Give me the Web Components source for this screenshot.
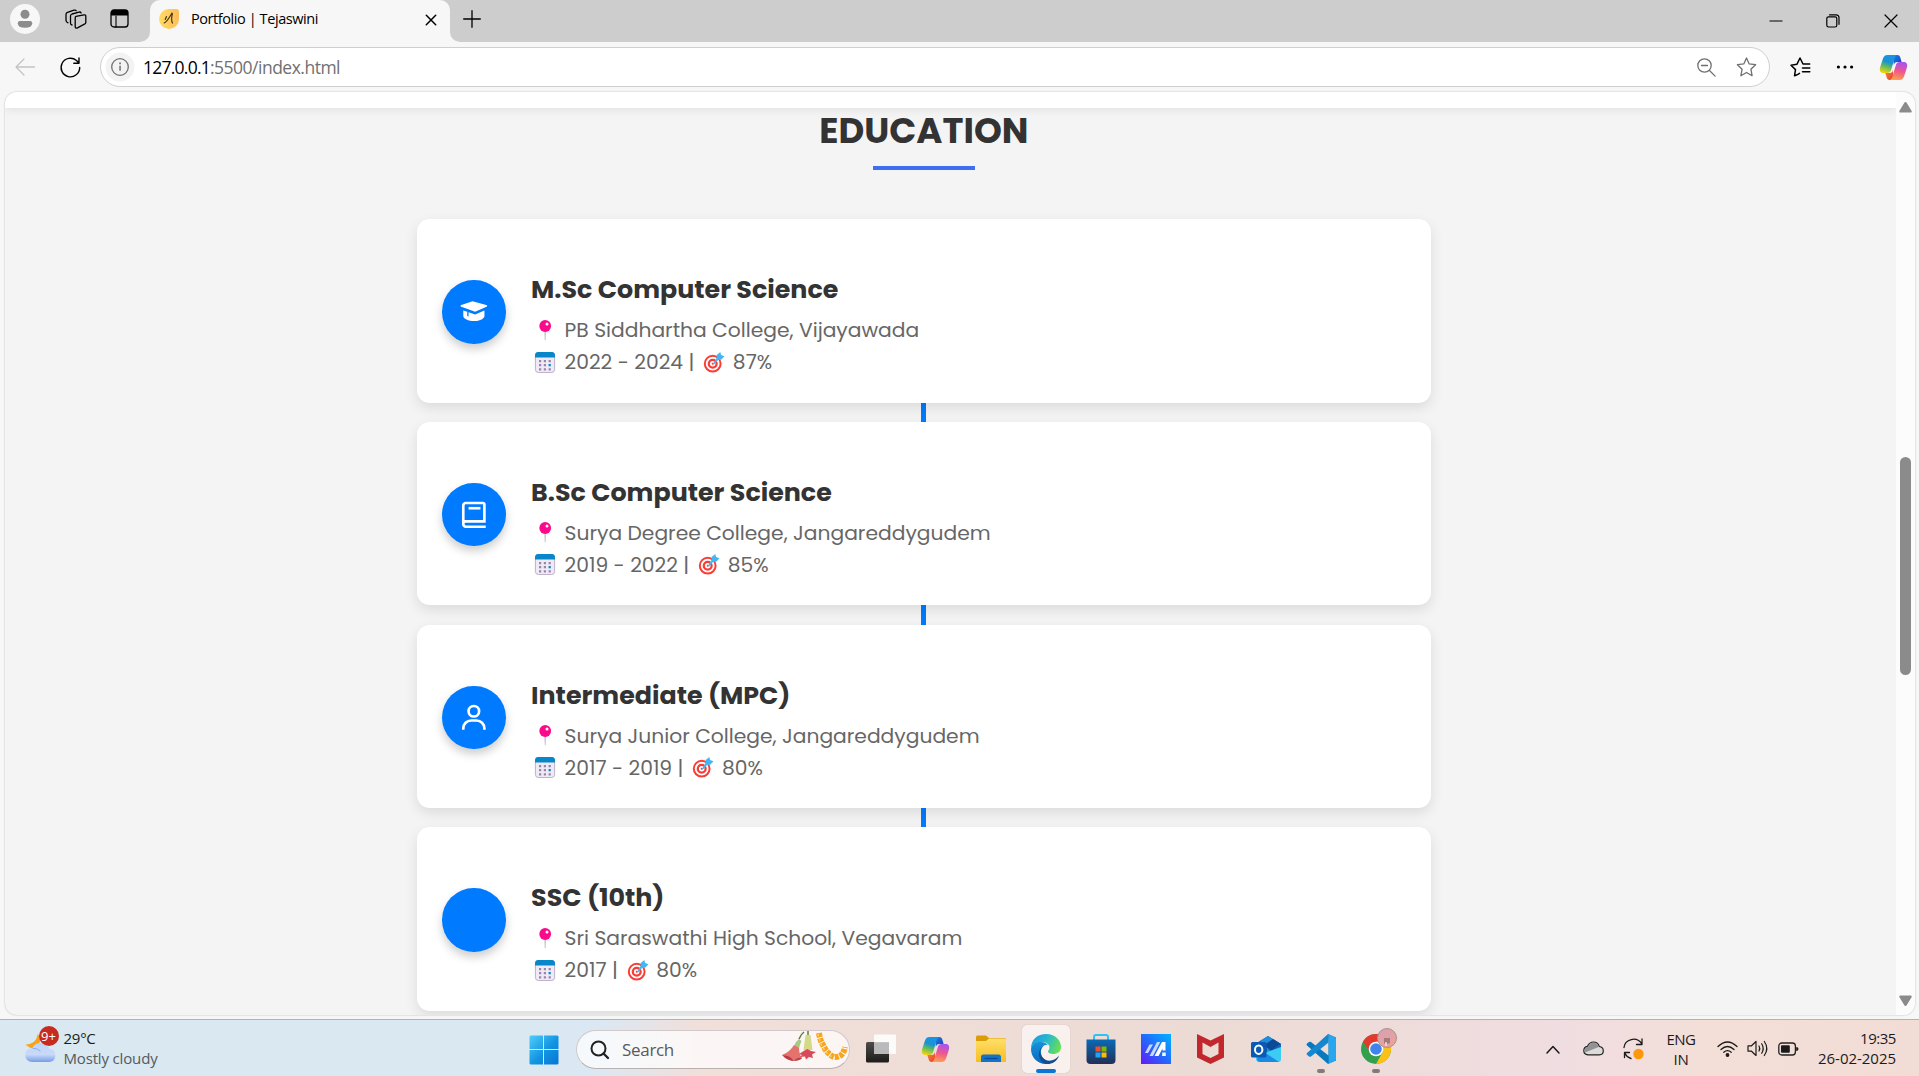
<!DOCTYPE html>
<html lang="en">
<head>
<meta charset="utf-8">
<title>Portfolio | Tejaswini</title>
<style>
html,body{margin:0;height:100%;overflow:hidden}
body{font-family:"Open Sans","Noto Sans",sans-serif;color:#1b1b1b}
</style>
</head>
<body>
<desktop-screen></desktop-screen>
<script>
const define = (name, html, init) => {
  const t = document.createElement('template');
  t.innerHTML = html;
  customElements.define(name, class extends HTMLElement {
    connectedCallback() {
      if (this.shadowRoot) return;
      const root = this.attachShadow({mode: 'open'});
      root.append(t.content.cloneNode(true));
      if (init) init.call(this, root);
    }
  });
};

const copilot = `<defs>
<linearGradient id="a" x1=".6" y1="0" x2=".3" y2="1"><stop offset="0" stop-color="#1595ea"/><stop offset=".4" stop-color="#1c93cf"/><stop offset=".65" stop-color="#5dbb63"/><stop offset="1" stop-color="#f5d30d"/></linearGradient>
<linearGradient id="b" x1=".6" y1="0" x2=".4" y2="1"><stop offset="0" stop-color="#a653f3"/><stop offset=".5" stop-color="#f0568e"/><stop offset="1" stop-color="#ffa04d"/></linearGradient>
<linearGradient id="c" x1="0" y1="0" x2="1" y2="1"><stop offset="0" stop-color="#1c7fe8"/><stop offset="1" stop-color="#1b3fc0"/></linearGradient>
<linearGradient id="d" x1="0" y1="0" x2="1" y2="1"><stop offset="0" stop-color="#f98a3a"/><stop offset="1" stop-color="#e3402b"/></linearGradient></defs>
<path fill="url(#c)" d="M14 1h4.500c1.600 0 2.300 1 2.800 2.500L22.600 8h-4.300c-2 0-3 1.200-3.500 3z"/>
<path fill="url(#d)" d="M14 26H10.500c-1.600 0-2.300-1-2.800-2.500L6.300 19h4.400c2 0 2.800-1.200 3.300-3z"/>
<path fill="url(#a)" d="M8.500 1h9.800c-1.700.4-2.300 2-2.900 4l-3 10c-.6 2.500-1.700 4-4.300 4H4.500C1 19 .2 16.300 1.200 13L4 4.500C4.900 2 6.300 1 8.500 1z"/>
<path fill="url(#b)" d="M20.500 26h-9.800c1.700-.4 2.300-2 2.900-4l3-10c.6-2.500 1.700-4 4.300-4h3.600c3.500 0 4.300 2.700 3.300 6L25 22.500c-.9 2.500-2.300 3.500-4.500 3.500z"/>`;

const line = (d, w = 1.2, extra = '') => `<path d="${d}" fill="none" stroke="currentColor" stroke-width="${w}" stroke-linejoin="round" stroke-linecap="round" ${extra}/>`;
const glyph = d => `<path transform="scale(1.32)" fill="#fff" d="${d}"/>`;

const ICONS = {
  profile: [30,30,`<circle cx="15" cy="15" r="15" fill="#f7f7f7"/><circle cx="15" cy="10.300" r="4.500" fill="#8c8c8c"/><path d="M10 17h10q2.200 0 2.200 2.200 0 4.600-7.200 4.600T7.800 19.200Q7.800 17 10 17z" fill="#8c8c8c"/>`],
  spaces: [22,20,line('M11 7.400l8-1.500q1.800-.3 1.800 1.300v6.300q0 1.300-1.400 1.700l-6.900 3.600q-2.100.8-2.300-1.200V9q0-1.300.8-1.600M7 16Q5.500 15.600 5.500 14V6.900q0-1.400 1.500-1.900l7-1.900q1.600-.4 2.100.9M3 13.800Q1 13.200 1 11.200V5.400Q1 4 2.500 3.400l6.500-2.200q1.600-.5 2.200.6',1.3)],
  tabs: [19,19,`<rect x="1" y="1" width="17" height="17" rx="3" fill="none" stroke="#000" stroke-width="1.300"/><path d="M1 6.500V4a3 3 0 013-3h11a3 3 0 013 3v2.500z"/>`+line('M6 7v11',1.1)],
  favicon: [20,20,`<defs><linearGradient id="f"><stop stop-color="#ffdc62"/><stop offset="1" stop-color="#ffbd59"/></linearGradient></defs><path d="M10 0h7a3 3 0 013 3v7a10 10 0 11-10-10z" fill="url(#f)"/><path d="M5.200 14C8.500 12.500 10.500 8 12.700 4.500c.5-.8.8-.2.6.8-.8 3-1 6.500.2 8.700M7.500 7.500l-1.300 3" fill="none" stroke="#463818" stroke-width="1.200" stroke-linecap="round"/>`],
  close: [12,12,line('M1.300 1.300l9.400 9.400M10.700 1.300L1.300 10.700',1.500)],
  plus: [18,18,line('M9 .7v16.600M.7 9h16.600',1.3)],
  min: [14,14,'<path d="M.5 6.500h13v1H.5z"/>'],
  restore: [14,14,line('M3.500 .8h6.500q3 0 3 3v6.500',1.2)+'<rect x=".8" y="2.800" width="10" height="10.200" rx="1.800" fill="none" stroke="currentColor" stroke-width="1.200"/>'],
  xbig: [14,14,line('M1 1l12 12M13 1L1 13',1.2)],
  back: [20,18,line('M9 1L1 9l8 8M1 9h18.500',1.3)],
  reload: [21,21,line('M19.700 10.500a9.300 9.300 0 11-3.200-7l2.500 2.500M19 .9V6.200h-5.200',1.4)],
  info: [30,30,'<circle cx="15" cy="15" r="14.500" fill="#f3f3f3"/><circle cx="15" cy="15" r="8.300" fill="none" stroke="#707070" stroke-width="1.300"/><path d="M14.300 13.800h1.500v5h-1.500zM14.200 10.600h1.700v1.600h-1.700z" fill="#707070"/>'],
  zoomout: [19,19,'<circle cx="7.500" cy="7.500" r="6.700" fill="none" stroke="currentColor" stroke-width="1.300"/>'+line('M4.500 7.500h6M12.500 12.500l5.600 5.600',1.3)],
  star: [21,20,line('M10.500 1l2.700 5.900 6.400.8-4.700 4.500 1.200 6.500-5.600-3.200-5.600 3.200 1.200-6.500L1.400 7.700l6.400-.8z',1.3)],
  favs: [21,20,line('M6.500 18l-2 .8 1-6.200L1 8.200l6-1L10 1l3 6h6.700M12.500 11h7.300M12.500 14.800h7.300M7 17.800l2.500-1.400',1.5)],
  dots: [18,6,'<circle cx="2.400" cy="3" r="1.600"/><circle cx="9" cy="3" r="1.600"/><circle cx="15.600" cy="3" r="1.600"/>'],
  copilot: [29,27,copilot],
  up: [13,11,'<path d="M6.500 0q.8 0 1.300.9L12.700 9q.5 1.500-1 1.500H1.300Q-.2 10.500.3 9L5.200.9Q5.700 0 6.500 0z" fill="#8b8b8b"/>'],
  down: [13,11,'<path d="M6.500 11q.8 0 1.300-.9L12.700 2q.5-1.500-1-1.500H1.300Q-.2.5.3 2l4.900 8.100q.5.900 1.300.9z" fill="#8b8b8b"/>'],
  cap: [31.680,31.680,glyph('M2 7v1l11 4 9-4V7L11 4z')+glyph('M4 11v4.267c0 1.621 4.001 3.893 9 3.734 4-.126 6.586-1.972 7-3.467.024-.089.037-.178.037-.268V11L13 14l-5-1.667v3.213l-1-.364V12l-3-1z')],
  book: [31.680,31.680,glyph('M6 22h15v-2H6.012C5.550 19.988 5 19.805 5 19s.550-.988 1.012-1H21V4c0-1.103-.897-2-2-2H6c-1.206 0-3 .799-3 3v14c0 2.201 1.794 3 3 3zM5 8V5c0-.805.550-.988 1-1h13v12H5V8z')+glyph('M8 6h9v2H8z')],
  user: [31.680,31.680,glyph('M12 2a5 5 0 1 0 5 5 5 5 0 0 0-5-5zm0 8a3 3 0 1 1 3-3 3 3 0 0 1-3 3zm9 11v-1a7 7 0 0 0-7-7h-4a7 7 0 0 0-7 7v1h2v-1a5 5 0 0 1 5-5h4a5 5 0 0 1 5 5v1z')],
  none: [28,28,''],
  pin: [24,24,'<path d="M11.300 12.500h1.800l-.4 8.500q-.5.800-1 0z" fill="#cbc6d0"/><circle cx="12.200" cy="7" r="5.900" fill="#fb0a8b"/><circle cx="14" cy="5" r="1.500" fill="#fff"/>'],
  cal: [24,24,'<rect x="2.400" y="1.700" width="19.200" height="19.800" rx="3" fill="#f0eaf6" stroke="#b6a9c5" stroke-width=".9"/><path d="M2 6.500V4.500Q2 1 5 1h14q3 0 3 3.500v2z" fill="#0787c9"/><path d="M6 9h2.200v2.200H6zM10.800 9H13v2.200h-2.200zM15.600 9h2.200v2.200h-2.200zM6 13.100h2.200v2.200H6zM10.800 13.100H13v2.200h-2.200zM6 17.200h2.200v2.200H6zM10.800 17.200H13v2.200h-2.200zM15.600 17.200h2.200v2.200h-2.200z" fill="#9686a7"/><path d="M15.600 13.100h2.200v2.200h-2.200z" fill="#0787c9"/>'],
  target: [24,24,'<circle cx="9.700" cy="12.700" r="7.900" fill="#fff" stroke="#fb3c35" stroke-width="2"/><circle cx="9.700" cy="12.700" r="3.900" fill="#fff" stroke="#fb3c35" stroke-width="2.300"/><circle cx="9.700" cy="12.700" r="1" fill="#fb3c35"/><path d="M9.800 12.900l3.700-6 .2-3L17.300.9l.8 3 3.400 1.300-3 3.400-3.500.3-4 4.700z" fill="#42b7f5"/>'],
  weather: [34,36,'<defs><linearGradient id="w" x2="0" y2="1"><stop stop-color="#bcd3fb"/><stop offset=".6" stop-color="#c8daf8"/><stop offset="1" stop-color="#769ce8"/></linearGradient></defs><path d="M12.500 8c3 2 4.500 9-2 15C6 23 2 20 .5 18.500 9 18 12 14 12.500 8z" fill="#f7a41c"/><path d="M7.500 36q-7-.3-7.300-7 0-6 7-6.700Q9.500 17 15.500 17q6.500 0 9 6 5.800.4 5.800 6.500T24 36z" fill="url(#w)"/><path d="M7.500 22.300q5-.4 8 3" fill="none" stroke="#8baef0"/>'],
  win: [30,30,'<defs><linearGradient id="g" gradientUnits="userSpaceOnUse" x2="30" y2="30"><stop stop-color="#4fd0fb"/><stop offset=".55" stop-color="#1293e2"/><stop offset="1" stop-color="#0475d2"/></linearGradient></defs><path d="M1.500.5H14V14H.5V1.500zM15 .5h13.500l1 1V14H15zM.5 15H14v14.500H1.500l-1-1zM15 15h14.500v13.500l-1 1H15z" fill="url(#g)"/>'],
  search: [20,20,'<circle cx="8.500" cy="8.500" r="7" fill="none" stroke="#222" stroke-width="2"/><path d="M13.500 13.500l4.500 4.500" stroke="#222" stroke-width="2.400" stroke-linecap="round"/>'],
  flowers: [66,32,`<path d="M18 8q2-5 5-7M27 0v6" stroke="#5f7b32" stroke-width="1.500" fill="none"/><path d="M13 15q2-5 5-7l2.500 2q-2 4-2.500 8z" fill="#aac783"/><path d="M1 24q8-3 12-10l5 3q0 6 3 10-6 0-8 3-6-5-12-6z" fill="#e4736d"/><path d="M1 24q8 0 12 6 3-4 8-3-1 2-7 3-8 0-13-6z" fill="#b93b48"/><path d="M24.500 4h5l2 15h-9z" fill="#d3d984"/><path d="M18 23l5.500-3.500 3-1.500 3.500 2 5 1-4 2.500 1 3.500-4-1-3 2.500-1-3-5 .5 2-2z" fill="#d94959"/><path d="M38 2q1 7 4 12 4 9 11 12 9 1 11-10" fill="none" stroke="#f9a51c" stroke-width="6" stroke-dasharray="4 1"/><path d="M37 3q2 8 4 12 5 9 12 12" fill="none" stroke="#ffd060" stroke-width="1.500" stroke-dasharray="2 3"/>`],
  taskview: [30,30,'<defs><linearGradient id="t" x2="0" y2="1"><stop stop-color="#4d4d4b"/><stop offset="1" stop-color="#1c1c1b"/></linearGradient></defs><rect y="8" width="23" height="20.500" rx="1.500" fill="url(#t)"/><path d="M9 .5h20q1 0 1 1V19q0 1-1 1H9q-1 0-1-1V1.500q0-1 1-1z" fill="#fff" opacity=".86"/><path d="M8 8.200h15V20H9q-1 0-1-1z" fill="#bababa"/>'],
  folder: [30,28,'<defs><linearGradient id="y" x2="0" y2="1"><stop stop-color="#ffe06b"/><stop offset="1" stop-color="#f7bd20"/></linearGradient></defs><path d="M0 2Q0 .5 1.500.5H10L13 3h15.500Q30 3 30 5v7H0z" fill="#dc9c08"/><path d="M0 6h10l3-2.500h15.500q1.500 0 1.500 1.500v22H0z" fill="url(#y)"/><path d="M5 27v-5q0-2.500 2.500-2.500h15q2.500 0 2.500 2.500v5z" fill="#1373c8"/><path d="M8.500 23.500h13" stroke="#064b98" stroke-width="1.200"/>'],
  edge: [30,30,'<defs><linearGradient id="e1" x1="0" y1=".2" x2="1" y2=".5"><stop stop-color="#149ce0"/><stop offset=".5" stop-color="#27b8d0"/><stop offset="1" stop-color="#66df55"/></linearGradient><linearGradient id="e2" x2="0" y2="1"><stop stop-color="#1493dc"/><stop offset="1" stop-color="#0a68bd"/></linearGradient></defs><path d="M0 15C0 5 7 0 15 0c10 0 15 7 15 13 0 5-4 7-8 7-3 0-5-1-5-2.500 0-1 1.500-1.500 1.500-4C18.500 10 15 8 10 8 4 8 1 11 0 15z" fill="url(#e1)"/><path d="M0 15C1 9.500 5 7.500 10 8c4 0 6 2 7 3-4-1-7 3-7 7 0 7 6 10 11 10q-3 2-6 2C6 30 0 23 0 15z" fill="url(#e2)"/><path d="M12 12c-4 4-3.500 10 2 13.500 5 3 11 0 14-4-1.500 6-7 8.500-11.500 8.500C9 30 4 18 12 12z" fill="#124d91"/>'],
  store: [30,30,'<defs><linearGradient id="s" x2="0" y2="1"><stop stop-color="#0a6ab5"/><stop offset="1" stop-color="#222e57"/></linearGradient></defs><path d="M8 7V3q0-2 2-2h10q2 0 2 2v4" fill="none" stroke="#2ec1f5" stroke-width="2"/><path d="M.5 5.500h29V26q0 4-4 4h-21q-4 0-4-4z" fill="url(#s)"/><path d="M9.500 12.500h5v5h-5z" fill="#f25022"/><path d="M15.500 12.500h5v5h-5z" fill="#7fba00"/><path d="M9.500 18.500h5v5h-5z" fill="#20a5ef"/><path d="M15.500 18.500h5v5h-5z" fill="#ffb901"/>'],
  asus: [30,30,'<defs><linearGradient id="m" x1="0" y1="1" x2="1" y2="0"><stop stop-color="#6518fa"/><stop offset=".5" stop-color="#236afb"/><stop offset="1" stop-color="#00b3ff"/></linearGradient></defs><path d="M0 0h30v30H0z" fill="url(#m)"/><path d="M4 19l4.500-8.500H12L7 19zM8.500 22L16 8h3.200L12 22z" fill="#c5d8ff"/><path d="M13.500 22L21 8h3.500v8.500h-3V14.500l-4 7.500zM21.200 18.500h3.500V22h-3.500z" fill="#fff"/>'],
  mcafee: [27,30,'<path d="M0 0l13.500 6.500L27 0v23.500L13.500 30 0 23.500zM5.500 8.500v11.500l8 4 8-4V8.500l-8 4.500z" fill="#c1272d" fill-rule="evenodd"/>'],
  outlook: [30,27,'<path d="M4 8L17 0l13 8v6L17 20 4 12z" fill="#1267b4"/><path d="M9 5l8-5 13 8-14 10V10z" fill="#1e8ddd"/><path d="M13 9l9-6 8 5-10 7z" fill="#0c4a97"/><path d="M5 20l25-9v12q0 3-3 3H9q-4 0-4-3z" fill="#3ccbf4"/><path d="M6 22l10-4 12 8H9q-3 0-3-4z" fill="#1a8be5"/><rect y="6" width="15.500" height="15.500" rx="1.500" fill="#0a5ab4"/><ellipse cx="7.700" cy="13.700" rx="3.700" ry="4.200" fill="none" stroke="#fff" stroke-width="2"/>'],
  vscode: [30,30,'<path d="M22 0l8 3.500v23L22 30 1 11.500q-1-1 0-2L3 8q1-.7 2 0l17.500 13.500V8.500z" fill="#0879be"/><path d="M22 0L5 15.500 1 19q-1 1 0 1.700L3 22.500q1 .7 2 0L22.500 8.500z" fill="#1387cf"/><path d="M22 0l6.500 3Q30 3.700 30 5v20q0 1.300-1.500 2L22 30q.7-.7.700-2V2q0-1.300-.7-2z" fill="#29a7ee"/>'],
  chrome: [36,36,'<defs><linearGradient id="k" x2=".4" y2="1"><stop stop-color="#d7a0b5"/><stop offset="1" stop-color="#e8a39a"/></linearGradient></defs><circle cx="15" cy="21" r="15" fill="#34a04e"/><path d="M2 13.500A15 15 0 0128 13.500H15L9 24z" fill="#e23b2e"/><path d="M28 13.500A15 15 0 0115 36l6.500-11.500q2-6-6.500-11z" fill="#fbc116"/><circle cx="15" cy="21" r="7.300" fill="#fff"/><circle cx="15" cy="21" r="5.800" fill="#3f83ee"/><circle cx="26" cy="10" r="9.500" fill="url(#k)" stroke="#ae8f8b"/><path d="M23 10h6v6q-1-2-2 0h-1q0-3-3 0z" fill="#a67a7c"/><path d="M25 14v4" stroke="#fff"/>'],
  chev: [14,9,line('M1 8l6-6.500L13 8',1.5)],
  cloud: [21,15,'<path d="M5 13.800Q.8 13.500.8 9.500.8 6 4.500 5.300 6.500 1 10.500 1q4.500 0 5.800 4.500 4 .5 4 4.300 0 4-4 4z" fill="#dcdbda" stroke="#222" stroke-width="1.200"/><path d="M1.500 10q-.2-4 3.500-4.200Q7 1.700 10.500 1.700q4 0 5.300 4.200L10 8.200 2 11.500z" fill="#929292"/>'],
  sync: [21,22,line('M1 9.500A9.500 9 0 0118.500 5.500M19 1v5.500h-5.500M1.500 19.500V14.500h5M2 15.500q2 4 6 5',1.3)+'<circle cx="15.500" cy="16" r="5.200" fill="#fb980b"/>'],
  wifi: [21,16,line('M1 5.500q9.500-9 19 0M4 8.500q6.500-6 13 0M6.800 11.300q3.700-3.300 7.400 0',1.300)+'<circle cx="10.500" cy="14" r="1.900"/>'],
  sound: [21,17,line('M1 5.800h3.500L9 1.500v14L4.500 11.200H1zM12 6q1.500 2.500 0 5M14.700 3.700q3 4.800 0 9.600M17.300 1.500q5 7 0 14',1.2)],
  battery: [21,14,'<rect x=".8" y="1" width="16.600" height="12" rx="3" fill="none" stroke="#222" stroke-width="1.300"/><rect x="3" y="3.200" width="8.800" height="7.600" rx="1" fill="#1b1b1b"/><path d="M18.200 5q2.300 0 2.300 2t-2.300 2z"/>']
};

define('ui-icon', `<style>:host{display:block;flex:none;line-height:0}svg{display:block;overflow:visible}</style>`, function (root) {
  const [w, h, body] = ICONS[this.getAttribute('name')];
  const box = document.createElement('div');
  box.innerHTML = `<svg width="${w}" height="${h}" viewBox="0 0 ${w} ${h}" fill="currentColor">${body}</svg>`;
  root.append(box);
});

/* Single line label spread over a given width by letter spacing. */
define('fit-text', `<style>:host{display:block;flex:none;white-space:nowrap}span{display:inline-block}</style><span><slot></slot></span>`, function (root) {
  const span = root.querySelector('span');
  const w = +this.getAttribute('w');
  this.style.width = w + 'px';
  const n = this.textContent.length;
  const natural = span.getBoundingClientRect().width;
  span.style.letterSpacing = ((w - natural) / n).toFixed(3) + 'px';
});

define('tab-strip', `<style>
:host{display:flex;height:42px;background:#cdcdcd;color:#000}
.left{width:150px;display:flex;box-sizing:border-box;border-bottom-right-radius:10px;background:#cdcdcd}
.wrap{background:#f7f7f7;display:flex}
.left ui-icon:nth-child(1){margin:3.500px 0 0 10px}.left ui-icon:nth-child(2){margin:9px 0 0 25px}.left ui-icon:nth-child(3){margin:9px 0 0 23px}
.tabbg{background:#cdcdcd;display:flex}
.tab{width:300px;height:42px;background:#f7f7f7;border-radius:10px 10px 0 0;display:flex}
.tab .f{margin:9px 0 0 9px}.tab fit-text{margin:5px 0 0 12px;font-size:14.500px;line-height:27px}.tab .c{margin:13.500px 0 0 auto;padding-right:13.500px}
.right{flex:1;display:flex;background:#cdcdcd;border-bottom-left-radius:10px}
.outer{flex:1;display:flex;background:#f7f7f7}
.right .p{margin:9.500px 0 0 13px}
.right .m{margin:13.500px 0 0 auto}.right .r{margin:13.500px 0 0 43px}.right .x{margin:13.500px 21px 0 44px}
</style>
<div class="wrap"><div class="left"><ui-icon name="profile"></ui-icon><ui-icon name="spaces"></ui-icon><ui-icon name="tabs"></ui-icon></div></div>
<div class="tabbg"><div class="tab"><ui-icon class="f" name="favicon"></ui-icon><fit-text w="127">Portfolio | Tejaswini</fit-text><ui-icon class="c" name="close"></ui-icon></div></div>
<div class="outer"><div class="right"><ui-icon class="p" name="plus"></ui-icon><ui-icon class="m" name="min"></ui-icon><ui-icon class="r" name="restore"></ui-icon><ui-icon class="x" name="xbig"></ui-icon></div></div>`);

define('address-bar', `<style>
:host{display:flex;height:50px;background:#f7f7f7;align-items:center;color:#000}
.b{margin-left:15px;color:#c4c4c4}.r{margin-left:24.500px}
.pill{margin:0 0 0 19.500px;box-sizing:border-box;width:1670px;height:40px;border:1px solid #cfcfcf;border-radius:20px;background:#fff;display:flex;align-items:center;padding:0 12.500px 0 4px;font-size:17.500px;line-height:32px;color:#707070}
.pill fit-text{margin-bottom:1px}
.h{color:#000;margin-left:8px}.z{margin-left:auto}.s{margin-left:20px}
.fv{margin-left:20px}.d{margin-left:25px}.cp{margin:0 0 0 25px}
</style>
<ui-icon class="b" name="back"></ui-icon><ui-icon class="r" name="reload"></ui-icon>
<div class="pill"><ui-icon name="info"></ui-icon><fit-text class="h" w="67">127.0.0.1</fit-text><fit-text w="130">:5500/index.html</fit-text><ui-icon class="z" name="zoomout"></ui-icon><ui-icon class="s" name="star"></ui-icon></div>
<ui-icon class="fv" name="favs"></ui-icon><ui-icon class="d" name="dots"></ui-icon><ui-icon class="cp" name="copilot"></ui-icon>`);

define('education-card', `<style>
:host{display:flex;position:relative;box-sizing:border-box;height:183.400px;border-radius:12.700px;background:#fff;box-shadow:0 5px 13px rgba(0,0,0,.1);padding-left:25.300px;font-family:Poppins,Inter,sans-serif}
.dot{width:63.300px;height:63.300px;border-radius:50%;background:#007bff;margin:61px 25.300px 0 0;display:grid;place-items:center;box-shadow:0 5px 10px rgba(0,0,0,.2)}
.dot ui-icon{margin-right:1px}
.body{padding-top:53.900px;color:#666;font-size:20.270px;white-space:nowrap}
.t{font-size:25.330px;line-height:32px;font-weight:700;color:#333;margin-bottom:8.900px}
.row{display:flex;line-height:32px;height:32px}
.row ui-icon{margin:4.500px 7.500px 0 2px}.row .g{margin-left:9px;margin-right:5.500px}
</style>
<div class="dot"></div><div class="body"></div>`, function (root) {
  const a = n => this.getAttribute(n);
  root.querySelector('.dot').innerHTML = `<ui-icon name="${a('icon')}"></ui-icon>`;
  root.querySelector('.body').innerHTML = `<div class="t">${a('heading')}</div>
  <div class="row"><ui-icon name="pin"></ui-icon><span>${a('place')}</span></div>
  <div class="row"><ui-icon name="cal"></ui-icon><span>${a('years')} |</span><ui-icon class="g" name="target"></ui-icon><span>${a('score')}</span></div>`;
});

define('page-view', `<style>
:host{display:flex;box-sizing:border-box;height:923px;margin:0 4px 0 5px;border-radius:12px;overflow:hidden;background:#f4f4f4;box-shadow:0 0 2px rgba(0,0,0,.28)}
.page{flex:1;display:flex;flex-direction:column;overflow:hidden}
.nav{height:16px;flex:none;background:#fff;box-shadow:0 2px 8px rgba(0,0,0,.08)}
.edu{width:1013.400px;margin-left:412.200px;display:flex;flex-direction:column;align-items:center}
h2{margin:2.700px 0 15.300px;font:700 35.470px/40px Poppins,Inter,sans-serif;color:#333}
.rule{width:101.400px;height:4px;background:#3f6ff0}
.list{margin-top:49.400px;align-self:stretch;display:flex;flex-direction:column;gap:19.300px;background:linear-gradient(#007bff,#007bff) center/5px 100% no-repeat}
.bar{width:19px;background:#fcfcfc;display:flex;flex-direction:column;align-items:center}
.bar ui-icon:first-child{margin:10px 0 344px}
.thumb{width:11px;height:218px;border-radius:6px;background:#8b8b8b;margin-bottom:320px}
</style>
<div class="page"><div class="nav"></div><div class="edu"><h2>EDUCATION</h2><div class="rule"></div>
<div class="list">
<education-card icon="cap" heading="M.Sc Computer Science" place="PB Siddhartha College, Vijayawada" years="2022 - 2024" score="87%"></education-card>
<education-card icon="book" heading="B.Sc Computer Science" place="Surya Degree College, Jangareddygudem" years="2019 - 2022" score="85%"></education-card>
<education-card icon="user" heading="Intermediate (MPC)" place="Surya Junior College, Jangareddygudem" years="2017 - 2019" score="80%"></education-card>
<education-card icon="none" heading="SSC (10th)" place="Sri Saraswathi High School, Vegavaram" years="2017" score="80%"></education-card>
</div></div></div>
<div class="bar"><ui-icon name="up"></ui-icon><div class="thumb"></div><ui-icon name="down"></ui-icon></div>`);

define('task-item', `<style>
:host{display:grid;position:relative;width:48px;height:48px;border-radius:5px;place-items:center;flex:none}
:host([active]){background:rgba(255,255,255,.6);box-shadow:0 0 1px rgba(0,0,0,.25)}
i{position:absolute;bottom:0;left:20px;width:8px;height:4px;border-radius:2px;background:#86797a;display:none}
:host([open]) i{display:block}
:host([active]) i{display:block;left:14px;width:20px;background:#0b76d4}
</style><slot></slot><i></i>`);

define('task-bar', `<style>
:host{display:flex;box-sizing:border-box;height:57px;border-top:1px solid #b3b1b4;background:linear-gradient(90deg,#d9e8f1 0,#dbe8f3 600px,#f1dfda 700px,#ecdbd4 1200px,#f0dde1 1560px,#f3dfd8 1700px,#f2ddd6 100%);font-size:15px;color:#1b1b1b}
.w{display:flex;width:529px;box-sizing:border-box;padding-left:24.500px}
.wi{position:relative;margin-top:6px}
.badge{position:absolute;left:14px;top:0;width:20px;height:20px;border-radius:50%;background:#c62b1f;color:#fff;font-size:13px;line-height:20px;text-align:center}
.wt{margin:8px 0 0 5px;line-height:20px}.wt .g{color:#535a60}
.win{margin-top:15px}
.srch{margin:10px 0 0 17px;box-sizing:border-box;width:274px;height:39px;border:1px solid #d3c9ca;border-bottom-color:#b9b0b0;border-radius:20px;background:rgba(255,255,255,.72);display:flex;align-items:center;padding:0 2px 0 13px;font-size:17px;color:#5a5a5a;line-height:34px}
.srch fit-text{margin-left:12px}.srch .fl{margin:-6px 0 0 auto}
.apps{display:flex;gap:7px;margin:5px 0 0 6.500px}
.tray{flex:1;display:flex;align-items:flex-start;padding-right:23px}
.tray .ch{margin:25px 0 0 146.500px}.cl{margin:21px 0 0 22.500px}.sy{margin:18px 0 0 19px}
.lang{margin:9px 0 0 23.500px;display:flex;flex-direction:column;align-items:center;line-height:20px;width:28px}
.wf{margin:21px 0 0 22px}.sd{margin:20px 0 0 8.500px}.bt{margin:22px 0 0 10px}
.tm{margin:8px 0 0 auto;display:flex;flex-direction:column;align-items:flex-end;line-height:20px}
.chr{margin:-6px -6px 0 0}
</style>
<div class="w"><div class="wi"><ui-icon name="weather"></ui-icon><div class="badge">9+</div></div><div class="wt"><fit-text w="32">29°C</fit-text><fit-text class="g" w="94">Mostly cloudy</fit-text></div></div>
<ui-icon class="win" name="win"></ui-icon>
<div class="srch"><ui-icon name="search"></ui-icon><fit-text w="52">Search</fit-text><ui-icon class="fl" name="flowers"></ui-icon></div>
<div class="apps">
<task-item><ui-icon name="taskview"></ui-icon></task-item><task-item><ui-icon name="copilot"></ui-icon></task-item><task-item><ui-icon name="folder"></ui-icon></task-item><task-item active><ui-icon name="edge"></ui-icon></task-item><task-item><ui-icon name="store"></ui-icon></task-item><task-item><ui-icon name="asus"></ui-icon></task-item><task-item><ui-icon name="mcafee"></ui-icon></task-item><task-item><ui-icon name="outlook"></ui-icon></task-item><task-item open><ui-icon name="vscode"></ui-icon></task-item><task-item open><ui-icon class="chr" name="chrome"></ui-icon></task-item></div>
<div class="tray"><ui-icon class="ch" name="chev"></ui-icon><ui-icon class="cl" name="cloud"></ui-icon><ui-icon class="sy" name="sync"></ui-icon>
<div class="lang"><fit-text w="29">ENG</fit-text><fit-text w="15">IN</fit-text></div>
<ui-icon class="wf" name="wifi"></ui-icon><ui-icon class="sd" name="sound"></ui-icon><ui-icon class="bt" name="battery"></ui-icon>
<div class="tm"><fit-text w="36">19:35</fit-text><fit-text w="78">26-02-2025</fit-text></div></div>`);

define('desktop-screen', `<style>
:host{display:flex;flex-direction:column;width:1919px;height:1076px;background:#f7f7f7;overflow:hidden}
task-bar{margin-top:auto}tab-strip,address-bar,page-view,task-bar{flex:none}
</style><tab-strip></tab-strip><address-bar></address-bar><page-view></page-view><task-bar></task-bar>`);
</script>
</body>
</html>
